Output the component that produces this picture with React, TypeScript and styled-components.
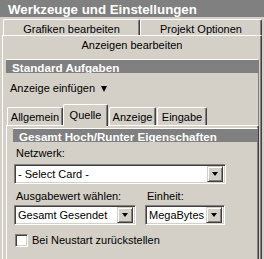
import React from 'react'
import styled, { createGlobalStyle } from 'styled-components'

const Global = createGlobalStyle`
  html, body { margin: 0; padding: 0; background: #d4d0c8; }
  body { font-family: "Liberation Sans", Arial, sans-serif; font-size: 11px; color: #000; }
  * { box-sizing: border-box; }
`

const Window = styled.div`
  width: 264px; height: 259px; overflow: hidden;
  background: #d4d0c8;
  display: flex; flex-direction: column;
`

const TitleBar = styled.div`
  height: 17px; flex: none;
  background: #808080; color: #fff;
  font-weight: bold; font-size: 13.3px; line-height: 15px;
  padding: 2px 0 0 8px;
  white-space: nowrap;
`

const TabRow = styled.div<{ $top?: number; $left?: number }>`
  display: flex; align-items: flex-end; flex: none;
  margin-top: ${(p) => p.$top ?? 0}px;
  padding-left: ${(p) => p.$left ?? 0}px;
  position: relative; z-index: 1;
`

const Tab = styled.div<{ $w: number; $h: number; $ml?: number; $selected?: boolean; $pt?: number; $square?: boolean }>`
  width: ${(p) => p.$w}px; height: ${(p) => p.$h}px;
  margin-left: ${(p) => p.$ml ?? 0}px;
  margin-bottom: ${(p) => (p.$selected ? -1 : 0)}px;
  background: #d4d0c8;
  border-top: 1px solid #fff; border-left: 1px solid #fff;
  border-right: 1px solid #404040;
  box-shadow: inset -1px 0 #808080;
  border-radius: ${(p) => (p.$square ? '0' : '2px 2px 0 0')};
  text-align: center; line-height: 12px;
  padding-top: ${(p) => p.$pt ?? 3}px;
  white-space: nowrap;
  position: relative; z-index: ${(p) => (p.$selected ? 2 : 1)};
`

const Panel = styled.div<{ $top?: boolean; $ml: number; $mr?: number; $w: number }>`
  margin-left: ${(p) => p.$ml}px; margin-right: ${(p) => p.$mr ?? 0}px;
  width: ${(p) => p.$w}px;
  flex: 1;
  border-left: 1px solid #fff; border-right: 1px solid #404040;
  border-top: ${(p) => (p.$top ? '1px solid #fff' : 'none')};
  box-shadow: inset -1px 0 #808080;
  display: flex; flex-direction: column;
  position: relative;
`

const PanelBody = styled.div<{ $pad: string }>`
  flex: 1; display: flex; flex-direction: column;
  padding: ${(p) => p.$pad};
`

const Group = styled.div`
  flex: 1; display: flex; flex-direction: column;
  border-top: 1px solid #fff;
  border-right: 1px solid #808080;
`

const GroupHeader = styled.div<{ $size: number }>`
  height: 13px; flex: none;
  background: #808080; color: #fff;
  font-weight: bold; font-size: ${(p) => p.$size}px;
  line-height: 13px; padding: 1px 0 0 6px;
  white-space: nowrap; overflow: hidden;
`

const ActionLine = styled.div`
  padding: 9px 0 0 4px; line-height: 13px;
  display: flex; align-items: center; gap: 6px;
`

const Arrow = styled.span`
  width: 0; height: 0; margin-top: 1px;
  border-left: 3.5px solid transparent; border-right: 3.5px solid transparent;
  border-top: 6px solid #000;
`

const InnerTabs = styled.div`
  margin-top: 9px; flex: 1;
  display: flex; flex-direction: column;
`

const Form = styled.div`
  display: flex; flex-direction: column;
  padding: 0 0 0 1px;
`

const Label = styled.div<{ $top: number }>`
  margin-top: ${(p) => p.$top}px; line-height: 13px; padding-left: 2px;
  white-space: nowrap;
`

const Row = styled.div`
  display: flex; gap: 9px;
`

const Col = styled.div<{ $w: number }>`
  width: ${(p) => p.$w}px; display: flex; flex-direction: column;
`

const Field = styled.div<{ $w: number; $top: number }>`
  width: ${(p) => p.$w}px; height: 20px; margin-top: ${(p) => p.$top}px;
  background: #fff;
  border: 1px solid; border-color: #808080 #fff #fff #808080;
  box-shadow: inset 1px 1px #404040, inset -1px -1px #d4d0c8;
  display: flex; align-items: center;
  padding: 2px 2px 2px 3px;
`

const FieldText = styled.span`
  flex: 1; white-space: nowrap; overflow: hidden; line-height: 13px;
`

const DropButton = styled.span`
  width: 16px; height: 16px; flex: none;
  background: #d4d0c8;
  border: 1px solid; border-color: #d4d0c8 #404040 #404040 #d4d0c8;
  box-shadow: inset 1px 1px #fff, inset -1px -1px #808080;
  display: flex; align-items: center; justify-content: center;
  &::after {
    content: ''; width: 0; height: 0;
    border-left: 3.5px solid transparent; border-right: 3.5px solid transparent;
    border-top: 4px solid #000;
  }
`

const CheckLine = styled.label`
  display: flex; align-items: center; gap: 4px;
  margin-top: 9px; padding-left: 1px; line-height: 13px;
  white-space: nowrap;
`

const CheckBox = styled.span`
  width: 13px; height: 13px; flex: none;
  background: #fff;
  border: 1px solid; border-color: #808080 #fff #fff #808080;
  box-shadow: inset 1px 1px #404040, inset -1px -1px #d4d0c8;
`

function Select({ value, w, top }: { value: string; w: number; top: number }) {
  return (
    <Field $w={w} $top={top}>
      <FieldText>{value}</FieldText>
      <DropButton />
    </Field>
  )
}

export default function App() {
  return (
    <>
      <Global />
      <Window>
        <TitleBar>Werkzeuge und Einstellungen</TitleBar>
        <TabRow $top={2} $left={3}>
          <Tab $w={137} $h={16}>Grafiken bearbeiten</Tab>
          <Tab $w={122} $h={16}>Projekt Optionen</Tab>
        </TabRow>
        <TabRow $left={2}>
          <Tab $w={260} $h={17} $pt={3} $square>Anzeigen bearbeiten</Tab>
        </TabRow>
        <Panel $ml={2} $w={260}>
          <PanelBody $pad="7px 2px 0 3px">
            <Group>
              <GroupHeader $size={11.7}>Standard Aufgaben</GroupHeader>
              <ActionLine>
                Anzeige einfügen <Arrow />
              </ActionLine>
              <InnerTabs>
                <TabRow $left={1}>
                  <Tab $w={56} $h={18} $pt={3}>Allgemein</Tab>
                  <Tab $w={45} $h={22} $pt={4} $selected>Quelle</Tab>
                  <Tab $w={47} $h={18} $ml={1} $pt={3}>Anzeige</Tab>
                  <Tab $w={50} $h={18} $ml={1} $pt={3}>Eingabe</Tab>
                </TabRow>
                <Panel $ml={0} $mr={-1} $w={253} $top>
                  <PanelBody $pad="2px 0 0 6px">
                    <Group>
                      <GroupHeader $size={11.6}>Gesamt Hoch/Runter Eigenschaften</GroupHeader>
                      <Form>
                        <Label $top={5}>Netzwerk:</Label>
                        <Select value="- Select Card -" w={212} top={4} />
                        <Row>
                          <Col $w={122}>
                            <Label $top={6}>Ausgabewert wählen:</Label>
                            <Select value="Gesamt Gesendet" w={122} top={2} />
                          </Col>
                          <Col $w={80}>
                            <Label $top={6}>Einheit:</Label>
                            <Select value="MegaBytes" w={80} top={2} />
                          </Col>
                        </Row>
                        <CheckLine>
                          <CheckBox />
                          Bei Neustart zurückstellen
                        </CheckLine>
                      </Form>
                    </Group>
                  </PanelBody>
                </Panel>
              </InnerTabs>
            </Group>
          </PanelBody>
        </Panel>
      </Window>
    </>
  )
}
